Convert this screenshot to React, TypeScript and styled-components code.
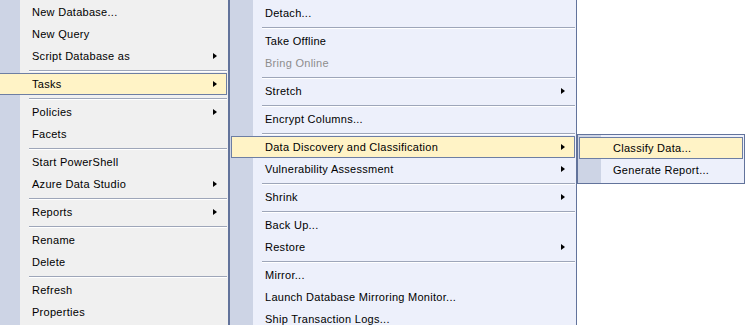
import React from "react";
import styled, { createGlobalStyle } from "styled-components";

const GlobalStyle = createGlobalStyle`
  html, body {
    margin: 0;
    padding: 0;
    height: 325px;
    overflow: hidden;
    background: #ffffff;
  }
  body {
    font-family: "Liberation Sans", Arial, sans-serif;
    font-size: 11px;
    letter-spacing: 0.28px;
    color: #000000;
  }
`;

const Desktop = styled.div`
  display: flex;
  align-items: flex-start;
`;

const Menu = styled.div<{ $width: number; $bg: string; $top: number; $left?: number }>`
  box-sizing: border-box;
  width: ${({ $width }) => $width + "px"};
  flex: none;
  margin-top: ${({ $top }) => $top + "px"};
  margin-left: ${({ $left }) => ($left ? $left + "px" : "0")};
  padding: 2px 0;
  border: 1px solid #62739b;
  background: linear-gradient(to right, #cdd4e5 0, #cdd4e5 23px, ${({ $bg }) => $bg} 23px);
`;

const Item = styled.div<{ $active?: boolean; $disabled?: boolean }>`
  box-sizing: border-box;
  display: flex;
  align-items: center;
  height: 22px;
  margin: 0 1px;
  padding: 0 9px 0 33px;
  border: 1px solid ${({ $active }) => ($active ? "#6d7ea3" : "transparent")};
  background: ${({ $active }) => ($active ? "#fff3c6" : "transparent")};
  color: ${({ $disabled }) => ($disabled ? "#8d8d8d" : "#000000")};
  white-space: nowrap;
`;

const Label = styled.span`
  flex: 1;
`;

const Arrow = styled.span`
  width: 0;
  height: 0;
  border-left: 4px solid #000000;
  border-top: 3.5px solid transparent;
  border-bottom: 3.5px solid transparent;
`;

const Separator = styled.div`
  height: 6px;
  box-sizing: border-box;
  margin: 0 1px 0 32px;
  padding-top: 3px;

  &::before {
    content: "";
    display: block;
    height: 1px;
    background: #9ea6b9;
    border-bottom: 1px solid #ffffff;
  }
`;

type Entry =
  | { label: string; sub?: boolean; disabled?: boolean; active?: boolean }
  | "sep";

const mainMenu: Entry[] = [
  { label: "New Database..." },
  { label: "New Query" },
  { label: "Script Database as", sub: true },
  "sep",
  { label: "Tasks", sub: true, active: true },
  "sep",
  { label: "Policies", sub: true },
  { label: "Facets" },
  "sep",
  { label: "Start PowerShell" },
  { label: "Azure Data Studio", sub: true },
  "sep",
  { label: "Reports", sub: true },
  "sep",
  { label: "Rename" },
  { label: "Delete" },
  "sep",
  { label: "Refresh" },
  { label: "Properties" },
];

const tasksMenu: Entry[] = [
  { label: "Detach..." },
  "sep",
  { label: "Take Offline" },
  { label: "Bring Online", disabled: true },
  "sep",
  { label: "Stretch", sub: true },
  "sep",
  { label: "Encrypt Columns..." },
  "sep",
  { label: "Data Discovery and Classification", sub: true, active: true },
  { label: "Vulnerability Assessment", sub: true },
  "sep",
  { label: "Shrink", sub: true },
  "sep",
  { label: "Back Up..." },
  { label: "Restore", sub: true },
  "sep",
  { label: "Mirror..." },
  { label: "Launch Database Mirroring Monitor..." },
  { label: "Ship Transaction Logs..." },
];

const classifyMenu: Entry[] = [
  { label: "Classify Data...", active: true },
  { label: "Generate Report..." },
];

const Entries: React.FC<{ items: Entry[] }> = ({ items }) => (
  <>
    {items.map((entry, i) =>
      entry === "sep" ? (
        <Separator key={i} />
      ) : (
        <Item key={i} $active={entry.active} $disabled={entry.disabled}>
          <Label>{entry.label}</Label>
          {entry.sub && <Arrow />}
        </Item>
      )
    )}
  </>
);

export default function App() {
  return (
    <>
      <GlobalStyle />
      <Desktop>
        <Menu $width={233} $bg="#f0f0f0" $top={-2} $left={-4}>
          <Entries items={mainMenu} />
        </Menu>
        <Menu $width={348} $bg="#edf0fb" $top={-1}>
          <Entries items={tasksMenu} />
        </Menu>
        <Menu $width={168} $bg="#edf0fb" $top={134}>
          <Entries items={classifyMenu} />
        </Menu>
      </Desktop>
    </>
  );
}
